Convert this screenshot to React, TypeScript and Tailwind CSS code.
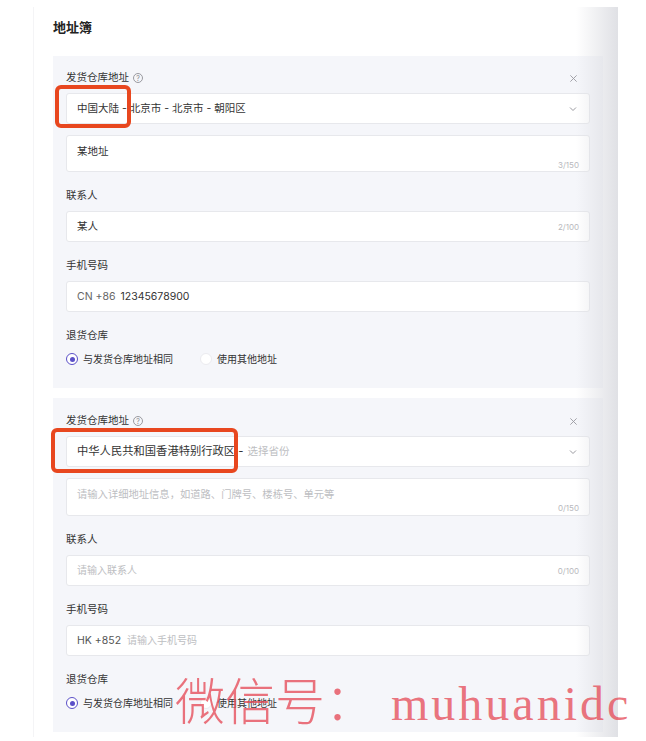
import React from 'react';

const SANS = "font-['Inter','Noto_Sans_CJK_SC',sans-serif]";

const Label: React.FC<{ text: string; help?: boolean; close?: boolean; first?: boolean }> = ({ text, help, close, first }) => (
  <div className={['flex items-center h-4 mb-[7px] text-[10.5px] text-[#333]', first ? '' : 'mt-[16px]'].join(' ')}>
    <span>{text}</span>
    {help ? (
      <span className="ml-[4px] inline-flex items-center justify-center w-[10px] h-[10px] rounded-full border border-[#9a9aa0] text-[7px] leading-none text-[#8a8a90]">
        ?
      </span>
    ) : null}
    {close ? (
      <svg className="ml-auto mr-[12px]" width="9" height="9" viewBox="0 0 10 10" aria-hidden>
        <path d="M1.5 1.5l7 7M8.5 1.5l-7 7" stroke="#9a9aa0" strokeWidth="1" fill="none" />
      </svg>
    ) : null}
  </div>
);

const Box: React.FC<{ children?: React.ReactNode; className?: string }> = ({ children, className }) => (
  <div
    className={[
      'relative h-[31px] rounded-[3px] border border-[#e7e8ec] bg-white flex items-center px-[10px] text-[10.5px] text-[#333]',
      className ?? '',
    ].join(' ')}
  >
    {children}
  </div>
);

const Chevron = () => (
  <svg className="ml-auto mr-[2px]" width="8" height="6" viewBox="0 0 8 6" aria-hidden>
    <path d="M1 1.5l3 3 3-3" stroke="#9a9aa0" strokeWidth="1" fill="none" />
  </svg>
);

const Counter: React.FC<{ text: string }> = ({ text }) => (
  <span className="ml-auto text-[8px] text-[#b8b9bd]">{text}</span>
);

const Radios = () => (
  <div className="mt-[6px] flex items-center h-4 text-[10px] text-[#333]">
    <span className="flex items-center justify-center w-[12px] h-[12px] rounded-full border-[1.5px] border-[#5b50c8] bg-white">
      <span className="w-[5px] h-[5px] rounded-full bg-[#5b50c8]" />
    </span>
    <span className="ml-[5px]">与发货仓库地址相同</span>
    <span className="ml-[27px] w-[12px] h-[12px] rounded-full border border-[#ebebef] bg-white" />
    <span className="ml-[5px]">使用其他地址</span>
  </div>
);

const Highlight: React.FC<{ className: string }> = ({ className }) => (
  <div className={['absolute border-[4px] border-[#e8471f] rounded-[6px] pointer-events-none', className].join(' ')} />
);

export default function App() {
  return (
    <div className={`relative w-[646px] h-[741px] overflow-hidden bg-white ${SANS}`}>
      <div className="relative mt-[7px] ml-[33px] w-[585px] h-[730px] border-l border-[#f4f4f6] pt-[10px] pl-[19px] pr-[15px]">
        <div className="h-5 text-[13px] font-bold text-[#222] leading-5">地址簿</div>

        {/* card 1 */}
        <div className="mt-[19px] bg-[#f5f6fa] px-[13px] pt-[14px] pb-[21px]">
          <Label text="发货仓库地址" help close first />
          <Box>
            <span>中国大陆 - 北京市 - 北京市 - 朝阳区</span>
            <Chevron />
            <Highlight className="-left-[12px] -top-[9px] w-[76px] h-[43px]" />
          </Box>
          <div className="mt-[11px] h-[37px] rounded-[3px] border border-[#e7e8ec] bg-white px-[10px] pt-[8px] flex flex-col text-[10.5px] text-[#333]">
            <span className="leading-4">某地址</span>
            <span className="self-end text-[8px] text-[#b8b9bd] leading-3 -mt-[1px]">3/150</span>
          </div>
          <Label text="联系人" />
          <Box>
            <span>某人</span>
            <Counter text="2/100" />
          </Box>
          <Label text="手机号码" />
          <Box>
            <span className="text-[#666]">CN +86</span>
            <span className="ml-[5px]">12345678900</span>
          </Box>
          <Label text="退货仓库" />
          <Radios />
        </div>

        {/* card 2 */}
        <div className="mt-[10px] bg-[#f5f6fa] px-[13px] pt-[15px] pb-[21px]">
          <Label text="发货仓库地址" help close first />
          <Box>
            <span className="text-[11.3px]">中华人民共和国香港特别行政区 - </span>
            <span className="ml-[4px] text-[#bdbec2]">选择省份</span>
            <Chevron />
            <Highlight className="-left-[16px] -top-[9px] w-[187px] h-[45px]" />
          </Box>
          <div className="mt-[11px] h-[38px] rounded-[3px] border border-[#e7e8ec] bg-white px-[10px] pt-[7px] flex flex-col text-[10.3px] text-[#bdbec2]">
            <span className="leading-4">请输入详细地址信息，如道路、门牌号、楼栋号、单元等</span>
            <span className="self-end text-[8px] text-[#b8b9bd] leading-3">0/150</span>
          </div>
          <Label text="联系人" />
          <Box>
            <span className="text-[#bdbec2] text-[10px]">请输入联系人</span>
            <Counter text="0/100" />
          </Box>
          <Label text="手机号码" />
          <Box>
            <span className="text-[#555]">HK +852</span>
            <span className="ml-[6px] text-[#bdbec2] text-[10px]">请输入手机号码</span>
          </Box>
          <Label text="退货仓库" />
          <Radios />
        </div>

        <div className="absolute right-0 top-0 bottom-0 w-[42px] bg-linear-to-r from-white/0 to-[#dcdde2]/90 pointer-events-none" />
      </div>

      <div className="absolute left-[175px] top-[668px] flex items-baseline text-[#e6505c]/80 pointer-events-none whitespace-nowrap">
        <span className="text-[50px] leading-[60px] font-light font-['Noto_Sans_CJK_SC',serif]">微信号：</span>
        <span className="ml-[16px] text-[48px] leading-[60px] tracking-[3px] font-['Liberation_Serif',serif]">muhuanidc</span>
      </div>
    </div>
  );
}
